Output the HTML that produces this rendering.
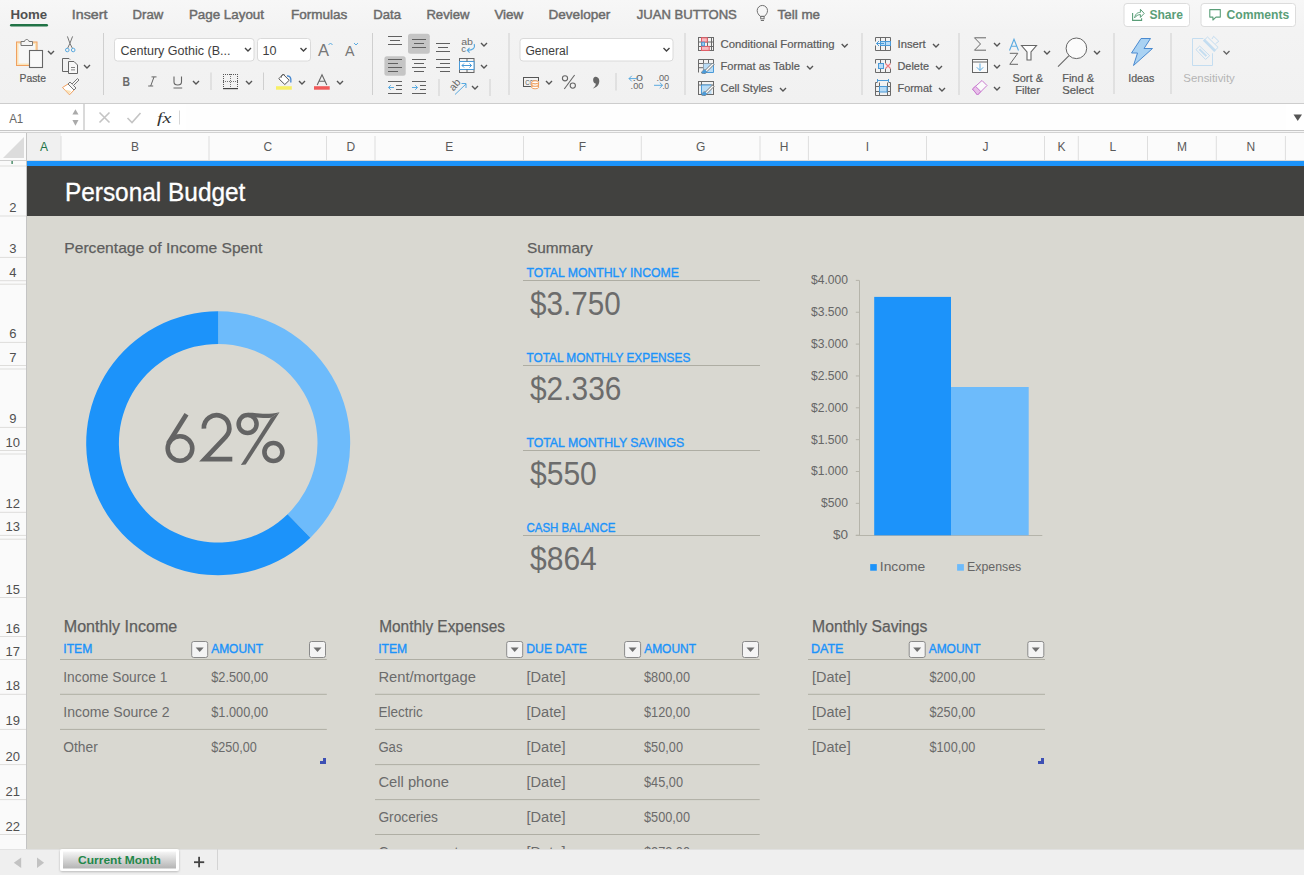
<!DOCTYPE html>
<html><head><meta charset="utf-8"><title>Personal Budget - Excel</title>
<style>
html,body{margin:0;padding:0;width:1304px;height:875px;overflow:hidden;background:#f1f1f1;font-family:"Liberation Sans",sans-serif;}
svg{display:block;position:absolute;left:0;top:0}
</style></head><body>
<svg width="1304" height="875" viewBox="0 0 1304 875">
<defs><filter id="sh" x="-10%" y="-20%" width="120%" height="150%"><feDropShadow dx="0" dy="0.8" stdDeviation="0.8" flood-color="#000" flood-opacity="0.25"/></filter></defs>
<linearGradient id="rib" x1="0" y1="0" x2="0" y2="1"><stop offset="0" stop-color="#f7f7f7"/><stop offset="0.3" stop-color="#f3f3f3"/><stop offset="1" stop-color="#f1f1f1"/></linearGradient>
<rect x="0" y="0" width="1304" height="103" fill="url(#rib)" />
<rect x="0" y="103" width="1304" height="1" fill="#cdcdcd" />
<rect x="0" y="104" width="1304" height="26" fill="#ffffff" />
<rect x="0" y="130" width="1304" height="1" fill="#c6c6c6" />
<rect x="0" y="131" width="1304" height="1" fill="#f6f6f6" />
<rect x="0" y="132" width="1304" height="1" fill="#d2d2d2" />
<rect x="0" y="133" width="1304" height="28" fill="#fbfbfb" />
<rect x="27" y="133" width="34" height="28" fill="#f0f0f0" />
<rect x="0" y="161" width="27" height="688.5" fill="#fafafa" />
<rect x="26" y="133" width="1" height="716" fill="#c4c4c4" />
<rect x="27" y="161" width="1277" height="688.5" fill="#d9d8d1" />
<rect x="27" y="161" width="1277" height="5" fill="#1c93fa" />
<rect x="27" y="166" width="1277" height="50" fill="#41413f" />
<rect x="0" y="849.5" width="1304" height="25.5" fill="#efefef" />
<rect x="0" y="849.3" width="1304" height="0.6" fill="#d8d8d8" />
<text x="10.4" y="19" font-size="13" fill="#505050" font-weight="bold" text-anchor="start" font-family="'Liberation Sans', sans-serif" textLength="36.8" lengthAdjust="spacingAndGlyphs" >Home</text>
<text x="71.8" y="19" font-size="13" fill="#6b6b6b" font-weight="normal" text-anchor="start" font-family="'Liberation Sans', sans-serif" textLength="35.6" lengthAdjust="spacingAndGlyphs" stroke="#6b6b6b" stroke-width="0.45">Insert</text>
<text x="132.6" y="19" font-size="13" fill="#6b6b6b" font-weight="normal" text-anchor="start" font-family="'Liberation Sans', sans-serif" textLength="30.7" lengthAdjust="spacingAndGlyphs" stroke="#6b6b6b" stroke-width="0.45">Draw</text>
<text x="188.9" y="19" font-size="13" fill="#6b6b6b" font-weight="normal" text-anchor="start" font-family="'Liberation Sans', sans-serif" textLength="75.1" lengthAdjust="spacingAndGlyphs" stroke="#6b6b6b" stroke-width="0.45">Page Layout</text>
<text x="290.9" y="19" font-size="13" fill="#6b6b6b" font-weight="normal" text-anchor="start" font-family="'Liberation Sans', sans-serif" textLength="56.4" lengthAdjust="spacingAndGlyphs" stroke="#6b6b6b" stroke-width="0.45">Formulas</text>
<text x="373.3" y="19" font-size="13" fill="#6b6b6b" font-weight="normal" text-anchor="start" font-family="'Liberation Sans', sans-serif" textLength="27.7" lengthAdjust="spacingAndGlyphs" stroke="#6b6b6b" stroke-width="0.45">Data</text>
<text x="426.4" y="19" font-size="13" fill="#6b6b6b" font-weight="normal" text-anchor="start" font-family="'Liberation Sans', sans-serif" textLength="43.0" lengthAdjust="spacingAndGlyphs" stroke="#6b6b6b" stroke-width="0.45">Review</text>
<text x="494.4" y="19" font-size="13" fill="#6b6b6b" font-weight="normal" text-anchor="start" font-family="'Liberation Sans', sans-serif" textLength="28.9" lengthAdjust="spacingAndGlyphs" stroke="#6b6b6b" stroke-width="0.45">View</text>
<text x="548.5" y="19" font-size="13" fill="#6b6b6b" font-weight="normal" text-anchor="start" font-family="'Liberation Sans', sans-serif" textLength="61.8" lengthAdjust="spacingAndGlyphs" stroke="#6b6b6b" stroke-width="0.45">Developer</text>
<text x="636.8" y="19" font-size="13" fill="#6b6b6b" font-weight="normal" text-anchor="start" font-family="'Liberation Sans', sans-serif" textLength="100.0" lengthAdjust="spacingAndGlyphs" stroke="#6b6b6b" stroke-width="0.45">JUAN BUTTONS</text>
<text x="777.6" y="19" font-size="13" fill="#6b6b6b" font-weight="normal" text-anchor="start" font-family="'Liberation Sans', sans-serif" textLength="42.4" lengthAdjust="spacingAndGlyphs" stroke="#6b6b6b" stroke-width="0.45">Tell me</text>
<rect x="10" y="24" width="38" height="2.6" fill="#217346" rx="1.3"/>
<path d="M760.2 16.3 C758.6 14.7 757.2 13 757.2 10.6 A5.15 5.15 0 0 1 767.5 10.6 C767.5 13 766.1 14.7 764.5 16.3 Z" stroke="#707070" fill="#f6f6f6" stroke-width="1" />
<rect x="760.7" y="16.5" width="3.4" height="2.3" fill="none" stroke="#707070" stroke-width="1"/>
<rect x="760.8" y="20" width="3.2" height="1" fill="#707070" />
<rect x="1124" y="3.5" width="65.5" height="23" fill="#ffffff" rx="3" stroke="#dcdcdc" stroke-width="1"/>
<rect x="1201" y="3.5" width="94.5" height="23" fill="#ffffff" rx="3" stroke="#dcdcdc" stroke-width="1"/>
<path d="M1132.6 13 V20.4 H1141.6 V18.3" stroke="#5a9e78" fill="none" stroke-width="1.1" />
<path d="M1134.6 17.8 C1135.5 13.6 1137.6 12.4 1140.4 12.4 V9.3 L1144.2 13.4 L1140.4 17.4 V14.6 C1138 14.6 1136.2 15.8 1134.6 17.8 Z" stroke="#5a9e78" fill="none" stroke-width="1" stroke-linejoin="round"/>
<text x="1149.4" y="19" font-size="13" fill="#5a9e78" font-weight="bold" text-anchor="start" font-family="'Liberation Sans', sans-serif" textLength="33.6" lengthAdjust="spacingAndGlyphs" >Share</text>
<path d="M1209.8 9.6 H1220.3 V17.1 H1216 L1212.9 20 V17.1 H1209.8 Z" stroke="#5a9e78" fill="none" stroke-width="1.1" stroke-linejoin="round"/>
<text x="1226.5" y="19" font-size="13" fill="#5a9e78" font-weight="bold" text-anchor="start" font-family="'Liberation Sans', sans-serif" textLength="62.8" lengthAdjust="spacingAndGlyphs" >Comments</text>
<rect x="16.5" y="42" width="20.5" height="23.5" fill="#fbe3b8" stroke="#f0a060" stroke-width="1"/>
<rect x="18.5" y="44" width="16.5" height="19.5" fill="#f7f7f7" />
<path d="M21 45.5 V41.5 H24.5 C25 38.8 28.5 38.8 29 41.5 H32.5 V45.5 Z" stroke="#777" fill="#f5f5f5" stroke-width="1" />
<rect x="29.5" y="50.5" width="13" height="17" fill="#f9f9f9" stroke="#666" stroke-width="1.1"/>
<path d="M48 51 L51 54 L54 51" stroke="#555" fill="none" stroke-width="1.4" />
<text x="19.5" y="81.9" font-size="11" fill="#5a5a5a" font-weight="normal" text-anchor="start" font-family="'Liberation Sans', sans-serif" textLength="26.5" lengthAdjust="spacingAndGlyphs" stroke="#5a5a5a" stroke-width="0.2">Paste</text>
<path d="M67.4 36.4 L70 43.6 L72.4 48.3 M72.6 36.4 L69.8 43.6 L67.6 48.3" stroke="#777" fill="none" stroke-width="1" />
<circle cx="67.3" cy="50" r="1.8" fill="none" stroke="#5aaae0" stroke-width="1"/>
<circle cx="73.2" cy="50" r="1.8" fill="none" stroke="#5aaae0" stroke-width="1"/>
<path d="M62.5 58.5 H69 L70 59.5 M62.5 58.5 V71.5 H68" stroke="#666" fill="none" stroke-width="1" />
<path d="M68.5 61.5 H74 L77.5 65 V73.5 H68.5 Z" stroke="#666" fill="#f7f7f7" stroke-width="1" />
<rect x="71" y="67" width="4" height="0.8" fill="#666" />
<rect x="71" y="69.5" width="4" height="0.8" fill="#666" />
<path d="M84 65 L87 68 L90 65" stroke="#555" fill="none" stroke-width="1.4" />
<path d="M62.5 87.5 L68 84 L74 90 L69.5 94.8 Z" stroke="#f0a060" fill="#fff" stroke-width="1" />
<path d="M64.5 89.5 L71 91 L69.5 94 Z" stroke="none" fill="#fbe3b8" stroke-width="1" />
<path d="M68 84 L70 82 L76 88 L74 90 Z" stroke="#777" fill="#f5f5f5" stroke-width="1" />
<path d="M72 84 L77.5 78.5 L79 80 L73.5 85.5" stroke="#777" fill="#f5f5f5" stroke-width="1" />
<rect x="103" y="33" width="1" height="62" fill="#cfcfcf" />
<rect x="114.5" y="38.5" width="139.5" height="22.5" fill="#ffffff" rx="3" stroke="#dadada" stroke-width="1"/>
<text x="120.5" y="55" font-size="12" fill="#3e3e3e" font-weight="normal" text-anchor="start" font-family="'Liberation Sans', sans-serif" textLength="110" lengthAdjust="spacingAndGlyphs" >Century Gothic (B...</text>
<path d="M245 48 L248 51 L251 48" stroke="#444" fill="none" stroke-width="1.4" />
<rect x="257.5" y="38.5" width="53" height="22.5" fill="#ffffff" rx="3" stroke="#dadada" stroke-width="1"/>
<text x="262.5" y="55" font-size="12" fill="#3e3e3e" font-weight="normal" text-anchor="start" font-family="'Liberation Sans', sans-serif" textLength="14" lengthAdjust="spacingAndGlyphs" >10</text>
<path d="M300.5 48 L303.5 51 L306.5 48" stroke="#444" fill="none" stroke-width="1.4" />
<text x="318" y="56" font-size="17" fill="#777" font-weight="normal" text-anchor="start" font-family="'Liberation Sans', sans-serif" textLength="11" lengthAdjust="spacingAndGlyphs" >A</text>
<path d="M328.5 45 L330.5 43 L332.5 45" stroke="#5aaae0" fill="none" stroke-width="1" />
<text x="345" y="56" font-size="14" fill="#777" font-weight="normal" text-anchor="start" font-family="'Liberation Sans', sans-serif" textLength="9.5" lengthAdjust="spacingAndGlyphs" >A</text>
<path d="M354 43 L356 45 L358 43" stroke="#5aaae0" fill="none" stroke-width="1" />
<text x="122.6" y="86.2" font-size="13" fill="#6a6a6a" font-weight="bold" text-anchor="start" font-family="'Liberation Sans', sans-serif" textLength="7.5" lengthAdjust="spacingAndGlyphs" >B</text>
<path d="M151.5 76.9 H156.5 M148.2 86 H153.2 M154 76.9 L150.7 86" stroke="#666" fill="none" stroke-width="1" />
<path d="M174 76.5 V82 C174 86 181.5 86 181.5 82 V76.5" stroke="#666" fill="none" stroke-width="1.1" />
<rect x="173.5" y="87.5" width="8.7" height="1" fill="#666" />
<path d="M193 81 L196 84 L199 81" stroke="#555" fill="none" stroke-width="1.4" />
<rect x="210.5" y="72.5" width="1" height="17.5" fill="#cfcfcf" />
<rect x="223" y="74" width="1" height="1" fill="#555" />
<rect x="223" y="74" width="1" height="1" fill="#555" />
<rect x="237" y="74" width="1" height="1" fill="#555" />
<rect x="230" y="74" width="1" height="1" fill="#777" />
<rect x="223" y="81" width="1" height="1" fill="#777" />
<rect x="225" y="74" width="1" height="1" fill="#555" />
<rect x="223" y="76" width="1" height="1" fill="#555" />
<rect x="237" y="76" width="1" height="1" fill="#555" />
<rect x="230" y="76" width="1" height="1" fill="#777" />
<rect x="225" y="81" width="1" height="1" fill="#777" />
<rect x="227" y="74" width="1" height="1" fill="#555" />
<rect x="223" y="78" width="1" height="1" fill="#555" />
<rect x="237" y="78" width="1" height="1" fill="#555" />
<rect x="230" y="78" width="1" height="1" fill="#777" />
<rect x="227" y="81" width="1" height="1" fill="#777" />
<rect x="229" y="74" width="1" height="1" fill="#555" />
<rect x="223" y="80" width="1" height="1" fill="#555" />
<rect x="237" y="80" width="1" height="1" fill="#555" />
<rect x="230" y="80" width="1" height="1" fill="#777" />
<rect x="229" y="81" width="1" height="1" fill="#777" />
<rect x="231" y="74" width="1" height="1" fill="#555" />
<rect x="223" y="82" width="1" height="1" fill="#555" />
<rect x="237" y="82" width="1" height="1" fill="#555" />
<rect x="230" y="82" width="1" height="1" fill="#777" />
<rect x="231" y="81" width="1" height="1" fill="#777" />
<rect x="233" y="74" width="1" height="1" fill="#555" />
<rect x="223" y="84" width="1" height="1" fill="#555" />
<rect x="237" y="84" width="1" height="1" fill="#555" />
<rect x="230" y="84" width="1" height="1" fill="#777" />
<rect x="233" y="81" width="1" height="1" fill="#777" />
<rect x="235" y="74" width="1" height="1" fill="#555" />
<rect x="223" y="86" width="1" height="1" fill="#555" />
<rect x="237" y="86" width="1" height="1" fill="#555" />
<rect x="230" y="86" width="1" height="1" fill="#777" />
<rect x="235" y="81" width="1" height="1" fill="#777" />
<rect x="237" y="74" width="1" height="1" fill="#555" />
<rect x="223" y="88" width="1" height="1" fill="#555" />
<rect x="237" y="88" width="1" height="1" fill="#555" />
<rect x="230" y="88" width="1" height="1" fill="#777" />
<rect x="237" y="81" width="1" height="1" fill="#777" />
<rect x="223" y="88" width="15" height="1.2" fill="#444" />
<path d="M246 81 L249 84 L252 81" stroke="#555" fill="none" stroke-width="1.4" />
<rect x="263" y="72.5" width="1" height="17.5" fill="#cfcfcf" />
<path d="M278.8 80.2 L283.2 75.8 L289.2 81.8 L284.8 86 Z" stroke="#555" fill="#fff" stroke-width="1" transform="translate(0,-1.5)"/>
<path d="M281.5 77.5 C281 74.5 283.5 73.8 285 75.5" stroke="#555" fill="none" stroke-width="1" />
<path d="M287 76 C290 75.5 291.5 78 290.8 82.5" stroke="#4a8ad0" fill="none" stroke-width="1.4" />
<rect x="276" y="86.2" width="15.8" height="3.5" fill="#f7ef66" />
<path d="M299 81 L302 84 L305 81" stroke="#555" fill="none" stroke-width="1.4" />
<path d="M317.2 85 L322 74.7 L326.8 85 M318.9 81.3 H325.1" stroke="#666" fill="none" stroke-width="1.1" />
<rect x="314" y="86.2" width="15.7" height="3.5" fill="#f05a5a" />
<path d="M337 81 L340 84 L343 81" stroke="#555" fill="none" stroke-width="1.4" />
<rect x="372" y="33" width="1" height="62" fill="#cfcfcf" />
<rect x="408" y="33.8" width="21.8" height="20" fill="#c5c5c5" rx="2.5"/>
<rect x="384.4" y="56.2" width="21.3" height="19.5" fill="#c5c5c5" rx="2.5"/>
<rect x="388" y="36" width="14" height="1" fill="#606060" />
<rect x="390" y="40" width="10" height="1" fill="#606060" />
<rect x="388" y="44" width="14" height="1" fill="#606060" />
<rect x="412" y="39" width="14" height="1" fill="#606060" />
<rect x="414" y="43" width="10" height="1" fill="#606060" />
<rect x="412" y="47" width="14" height="1" fill="#606060" />
<rect x="436" y="43" width="14" height="1" fill="#606060" />
<rect x="438" y="47" width="10" height="1" fill="#606060" />
<rect x="436" y="51" width="14" height="1" fill="#606060" />
<text x="461.2" y="44.8" font-size="9.5" fill="#6a6a6a" font-weight="normal" text-anchor="start" font-family="'Liberation Sans', sans-serif" textLength="11.8" lengthAdjust="spacingAndGlyphs" >ab</text>
<text x="461.2" y="52.3" font-size="9.5" fill="#6a6a6a" font-weight="normal" text-anchor="start" font-family="'Liberation Sans', sans-serif" >c</text>
<path d="M474.2 44 C475.5 48.5 472.5 50.2 467.5 50.2 M469.6 47.8 L467.3 50.2 L469.6 52.6" stroke="#5aaae0" fill="none" stroke-width="1.1" />
<path d="M481 43 L484 46 L487 43" stroke="#555" fill="none" stroke-width="1.4" />
<rect x="388" y="59" width="14" height="1" fill="#606060" />
<rect x="412.0" y="59" width="14" height="1" fill="#606060" />
<rect x="436" y="59" width="14" height="1" fill="#606060" />
<rect x="388" y="63" width="10" height="1" fill="#606060" />
<rect x="414.0" y="63" width="10" height="1" fill="#606060" />
<rect x="440" y="63" width="10" height="1" fill="#606060" />
<rect x="388" y="67" width="14" height="1" fill="#606060" />
<rect x="412.0" y="67" width="14" height="1" fill="#606060" />
<rect x="436" y="67" width="14" height="1" fill="#606060" />
<rect x="388" y="71" width="10" height="1" fill="#606060" />
<rect x="414.0" y="71" width="10" height="1" fill="#606060" />
<rect x="440" y="71" width="10" height="1" fill="#606060" />
<rect x="459.5" y="58.5" width="14.5" height="14" fill="none" stroke="#666" stroke-width="1"/>
<rect x="459.5" y="61.5" width="14.5" height="8" fill="#ffffff" stroke="#4a9ad8" stroke-width="1"/>
<rect x="466.5" y="58.5" width="1" height="3" fill="#666" />
<rect x="466.5" y="69.5" width="1" height="3" fill="#666" />
<path d="M462 65.5 H471.5 M464 63.5 L462 65.5 L464 67.5 M469.5 63.5 L471.5 65.5 L469.5 67.5" stroke="#4a9ad8" fill="none" stroke-width="1" />
<path d="M481 65 L484 68 L487 65" stroke="#555" fill="none" stroke-width="1.4" />
<rect x="388" y="81" width="14" height="1" fill="#606060" />
<rect x="396" y="85" width="6" height="1" fill="#606060" />
<rect x="396" y="89" width="6" height="1" fill="#606060" />
<rect x="388" y="93" width="14" height="1" fill="#606060" />
<rect x="412" y="81" width="14" height="1" fill="#606060" />
<rect x="420" y="85" width="6" height="1" fill="#606060" />
<rect x="420" y="89" width="6" height="1" fill="#606060" />
<rect x="412" y="93" width="14" height="1" fill="#606060" />
<path d="M394 87.5 H388.5 M390.8 85.2 L388.5 87.5 L390.8 89.8" stroke="#5aaae0" fill="none" stroke-width="1" />
<path d="M412 87.5 H417.5 M415.2 85.2 L417.5 87.5 L415.2 89.8" stroke="#5aaae0" fill="none" stroke-width="1" />
<rect x="438.5" y="79" width="1" height="17" fill="#cfcfcf" />
<text x="0" y="0" font-size="10.5" fill="#6a6a6a" font-weight="normal" text-anchor="start" font-family="'Liberation Sans', sans-serif" transform="translate(453.4,91.4) rotate(-48)">ab</text>
<path d="M455 94.5 L466 84 M461.5 83.5 H466 V88" stroke="#5aaae0" fill="none" stroke-width="1" />
<path d="M472 86 L475 89 L478 86" stroke="#555" fill="none" stroke-width="1.4" />
<rect x="489.5" y="79" width="1" height="17" fill="#cfcfcf" />
<rect x="508.5" y="33" width="1" height="62" fill="#cfcfcf" />
<rect x="520" y="38.5" width="153" height="22.5" fill="#ffffff" rx="3" stroke="#dadada" stroke-width="1"/>
<text x="525.4" y="55" font-size="12" fill="#3e3e3e" font-weight="normal" text-anchor="start" font-family="'Liberation Sans', sans-serif" textLength="43" lengthAdjust="spacingAndGlyphs" >General</text>
<path d="M663.5 48 L666.5 51 L669.5 48" stroke="#444" fill="none" stroke-width="1.4" />
<rect x="523.5" y="77.5" width="15" height="9" fill="none" stroke="#555" stroke-width="1"/>
<text x="525.3" y="84.6" font-size="6.8" fill="#555" font-weight="normal" text-anchor="start" font-family="'Liberation Sans', sans-serif" textLength="11" lengthAdjust="spacingAndGlyphs" >C02</text>
<rect x="530.8" y="81.3" width="8.6" height="9" fill="#f1f1f1" />
<ellipse cx="535.1" cy="87.3" rx="3.4" ry="1.5" fill="#fff" stroke="#f0a060" stroke-width="1"/>
<ellipse cx="535.1" cy="84.8" rx="3.4" ry="1.5" fill="#fff" stroke="#f0a060" stroke-width="1"/>
<ellipse cx="535.1" cy="82.3" rx="3.4" ry="1.5" fill="#fff" stroke="#f0a060" stroke-width="1"/>
<path d="M531.7 82.3 V87.3 M538.5 82.3 V87.3" stroke="#f0a060" fill="none" stroke-width="1" />
<ellipse cx="535.1" cy="82.3" rx="3.4" ry="1.5" fill="#fff" stroke="#f0a060" stroke-width="1"/>
<path d="M546 81 L549 84 L552 81" stroke="#555" fill="none" stroke-width="1.4" />
<circle cx="565" cy="78.3" r="2.6" fill="none" stroke="#666" stroke-width="1.1"/>
<circle cx="572.8" cy="85.6" r="2.6" fill="none" stroke="#666" stroke-width="1.1"/>
<path d="M564.3 89 L574.6 75" stroke="#666" fill="none" stroke-width="1.1" />
<path d="M595.2 76.8 C599.5 76.5 600.5 82 598 85.3 C596.6 87 594.8 88 592.8 88.6 C594.8 86.8 596 85.2 595.7 83.6 C592.6 83.4 592.2 77.2 595.2 76.8Z" stroke="none" fill="#666" stroke-width="1" />
<rect x="615.5" y="73" width="1" height="17.5" fill="#cfcfcf" />
<text x="632.5" y="80.6" font-size="8.8" fill="#666" font-weight="normal" text-anchor="start" font-family="'Liberation Sans', sans-serif" textLength="10.5" lengthAdjust="spacingAndGlyphs" >.0</text>
<text x="630.6" y="89.2" font-size="8.8" fill="#666" font-weight="normal" text-anchor="start" font-family="'Liberation Sans', sans-serif" textLength="12.8" lengthAdjust="spacingAndGlyphs" >.00</text>
<path d="M637 78.6 H629 M631.8 75.8 L629 78.6 L631.8 81.4" stroke="#5aaae0" fill="none" stroke-width="1" />
<text x="656.4" y="80.6" font-size="8.8" fill="#666" font-weight="normal" text-anchor="start" font-family="'Liberation Sans', sans-serif" textLength="12.8" lengthAdjust="spacingAndGlyphs" >.00</text>
<text x="662.4" y="89.2" font-size="8.8" fill="#666" font-weight="normal" text-anchor="start" font-family="'Liberation Sans', sans-serif" textLength="6.7" lengthAdjust="spacingAndGlyphs" >.0</text>
<path d="M654 85.3 H662.5 M659.7 82.5 L662.5 85.3 L659.7 88.1" stroke="#5aaae0" fill="none" stroke-width="1" />
<rect x="684.5" y="33" width="1" height="62" fill="#cfcfcf" />
<rect x="698.5" y="37.5" width="15" height="13" fill="none" stroke="#6a6a6a" stroke-width="1"/>
<rect x="701" y="37.5" width="1" height="13" fill="#6a6a6a" />
<rect x="711" y="37.5" width="1" height="13" fill="#6a6a6a" />
<rect x="707" y="37.5" width="1" height="13" fill="#6a6a6a" />
<rect x="698.5" y="41.5" width="15" height="1" fill="#6a6a6a" />
<rect x="698.5" y="46" width="15" height="1" fill="#6a6a6a" />
<rect x="701.5" y="37.8" width="5.8" height="4.2" fill="#f7b9bf" stroke="#e85a64" stroke-width="1"/>
<rect x="701.5" y="46.4" width="7.7" height="4" fill="#f7b9bf" stroke="#e85a64" stroke-width="1"/>
<rect x="701.8" y="42.2" width="2.6" height="3.6" fill="#a9d2f3" stroke="#4a9ad8" stroke-width="1"/>
<text x="720.5" y="48.1" font-size="11" fill="#5a5a5a" font-weight="normal" text-anchor="start" font-family="'Liberation Sans', sans-serif" textLength="114" lengthAdjust="spacingAndGlyphs" stroke="#5a5a5a" stroke-width="0.2">Conditional Formatting</text>
<path d="M841.7 44 L844.7 47 L847.7 44" stroke="#555" fill="none" stroke-width="1.4" />
<path d="M698.5 72.5 V59.5 H713.5 V63.5" stroke="#6a6a6a" fill="none" stroke-width="1" />
<rect x="698.5" y="63" width="15" height="1" fill="#6a6a6a" />
<rect x="698.5" y="67.2" width="5" height="1" fill="#6a6a6a" />
<rect x="703" y="59.5" width="1" height="13" fill="#6a6a6a" />
<rect x="708" y="59.5" width="1" height="4" fill="#6a6a6a" />
<rect x="703.5" y="63.5" width="10" height="9" fill="#b9dcf6" />
<path d="M713.5 63.5 V72.5 H703.5" stroke="#4a9ad8" fill="none" stroke-width="1" />
<path d="M701.5 73 C702.5 70.5 703.5 69.5 705.5 70 L712.5 63 L714 64.5 L707 71.5 C706.5 73.5 704 74 701.5 73Z" stroke="#6a6a6a" fill="#fff" stroke-width="0.9" />
<path d="M701.5 73 C702.5 70.5 703.5 69.5 705.5 70 L707 71.5 C706.5 73.5 704 74 701.5 73Z" stroke="none" fill="#4a9ad8" stroke-width="1" />
<text x="720.5" y="70.3" font-size="11" fill="#5a5a5a" font-weight="normal" text-anchor="start" font-family="'Liberation Sans', sans-serif" textLength="79.3" lengthAdjust="spacingAndGlyphs" stroke="#5a5a5a" stroke-width="0.2">Format as Table</text>
<path d="M807 66 L810 69 L813 66" stroke="#555" fill="none" stroke-width="1.4" />
<rect x="698.5" y="81.5" width="15" height="13" fill="none" stroke="#6a6a6a" stroke-width="1"/>
<rect x="701" y="81.5" width="1" height="13" fill="#6a6a6a" />
<rect x="698.5" y="84.5" width="15" height="1" fill="#6a6a6a" />
<rect x="701.5" y="85" width="10" height="9" fill="#b9dcf6" />
<path d="M701.5 94 V85 H711.5" stroke="#4a9ad8" fill="none" stroke-width="1" />
<path d="M701.5 95 C702.5 92.5 703.5 91.5 705.5 92 L712.5 85 L714 86.5 L707 93.5 C706.5 95.5 704 96 701.5 95Z" stroke="#6a6a6a" fill="#fff" stroke-width="0.9" />
<path d="M701.5 95 C702.5 92.5 703.5 91.5 705.5 92 L707 93.5 C706.5 95.5 704 96 701.5 95Z" stroke="none" fill="#4a9ad8" stroke-width="1" />
<text x="720.5" y="92.1" font-size="11" fill="#5a5a5a" font-weight="normal" text-anchor="start" font-family="'Liberation Sans', sans-serif" textLength="52" lengthAdjust="spacingAndGlyphs" stroke="#5a5a5a" stroke-width="0.2">Cell Styles</text>
<path d="M780 88 L783 91 L786 88" stroke="#555" fill="none" stroke-width="1.4" />
<rect x="861.5" y="33" width="1" height="62" fill="#cfcfcf" />
<path d="M875.5 41.5 V37.5 H890.5 V41.5 M875.5 45.5 V50.5 H890.5 V45.5" stroke="#6a6a6a" fill="none" stroke-width="1" />
<rect x="880" y="37.5" width="1" height="4" fill="#6a6a6a" />
<rect x="885" y="37.5" width="1" height="4" fill="#6a6a6a" />
<rect x="880" y="45.5" width="1" height="5" fill="#6a6a6a" />
<rect x="885" y="45.5" width="1" height="5" fill="#6a6a6a" />
<rect x="880.5" y="41.5" width="10" height="4" fill="#b9dcf6" stroke="#4a9ad8" stroke-width="1"/>
<rect x="885" y="41.5" width="1" height="4" fill="#4a9ad8" />
<path d="M884 43.5 H876.5 M879 41 L876.5 43.5 L879 46" stroke="#4a9ad8" fill="none" stroke-width="1" />
<text x="897.5" y="48.1" font-size="11" fill="#5a5a5a" font-weight="normal" text-anchor="start" font-family="'Liberation Sans', sans-serif" textLength="28.2" lengthAdjust="spacingAndGlyphs" stroke="#5a5a5a" stroke-width="0.2">Insert</text>
<path d="M933 44 L936 47 L939 44" stroke="#555" fill="none" stroke-width="1.4" />
<path d="M875.5 63.5 V59.5 H890.5 V63.5 M875.5 68.5 V72.5 H890.5 V68.5" stroke="#6a6a6a" fill="none" stroke-width="1" />
<rect x="880" y="59.5" width="1" height="4" fill="#6a6a6a" />
<rect x="885" y="59.5" width="1" height="4" fill="#6a6a6a" />
<rect x="880" y="68.5" width="1" height="4" fill="#6a6a6a" />
<rect x="885" y="68.5" width="1" height="4" fill="#6a6a6a" />
<rect x="878.5" y="63.5" width="5" height="5" fill="#b9dcf6" stroke="#4a9ad8" stroke-width="1"/>
<path d="M885.5 63.5 L890.5 68.5 M890.5 63.5 L885.5 68.5" stroke="#ef7a80" fill="none" stroke-width="1.1" />
<text x="897.5" y="70.3" font-size="11" fill="#5a5a5a" font-weight="normal" text-anchor="start" font-family="'Liberation Sans', sans-serif" textLength="31.5" lengthAdjust="spacingAndGlyphs" stroke="#5a5a5a" stroke-width="0.2">Delete</text>
<path d="M936 66 L939 69 L942 66" stroke="#555" fill="none" stroke-width="1.4" />
<path d="M875.5 86 V82.5 H877.5 M888.5 82.5 H890.5 V86" stroke="#6a6a6a" fill="none" stroke-width="1" />
<rect x="875.5" y="82.5" width="15" height="13" fill="none" stroke="#6a6a6a" stroke-width="0"/>
<path d="M875.5 86 V95.5 H890.5 V86" stroke="#6a6a6a" fill="none" stroke-width="1" />
<rect x="879" y="82.5" width="1" height="13" fill="#6a6a6a" />
<rect x="887" y="82.5" width="1" height="13" fill="#6a6a6a" />
<rect x="875.5" y="86" width="15" height="1" fill="#6a6a6a" />
<rect x="875.5" y="91" width="15" height="1" fill="#6a6a6a" />
<rect x="879.5" y="86.5" width="7.5" height="5.5" fill="#b9dcf6" stroke="#4a9ad8" stroke-width="1"/>
<path d="M877.5 80.5 H888.5 M877.5 79 V82 M888.5 79 V82" stroke="#4a9ad8" fill="none" stroke-width="1" />
<text x="897.5" y="92.1" font-size="11" fill="#5a5a5a" font-weight="normal" text-anchor="start" font-family="'Liberation Sans', sans-serif" textLength="34.5" lengthAdjust="spacingAndGlyphs" stroke="#5a5a5a" stroke-width="0.2">Format</text>
<path d="M939 88 L942 91 L945 88" stroke="#555" fill="none" stroke-width="1.4" />
<rect x="958.5" y="33" width="1" height="62" fill="#cfcfcf" />
<path d="M986 37.8 H974.5 L980.5 44 L974.5 50.2 H986" stroke="#666" fill="none" stroke-width="1" />
<path d="M994 43 L997 46 L1000 43" stroke="#555" fill="none" stroke-width="1.4" />
<rect x="972.5" y="59.5" width="15" height="13" fill="#fafafa" stroke="#666" stroke-width="1"/>
<rect x="972.5" y="61.5" width="15" height="1" fill="#666" />
<path d="M980 63.5 V70.5 M976.8 67.3 L980 70.5 L983.2 67.3" stroke="#5aaae0" fill="none" stroke-width="1" />
<path d="M994 65 L997 68 L1000 65" stroke="#555" fill="none" stroke-width="1.4" />
<path d="M972.5 89 L982 80.5 L987 85.5 L977.5 95 Z" stroke="#c97ad0" fill="#fafafa" stroke-width="1" />
<path d="M972.5 89 L975.5 86.3 L980.8 91.5 L977.5 95 Z" stroke="#c97ad0" fill="#e7bfe9" stroke-width="1" />
<path d="M994 87 L997 90 L1000 87" stroke="#555" fill="none" stroke-width="1.4" />
<path d="M1009.5 50.5 L1014 39.2 L1018.5 50.5 M1011.2 46.3 H1016.8" stroke="#5aaae0" fill="none" stroke-width="1.1" />
<path d="M1009.8 53.3 H1017.8 L1009.8 64.3 H1018" stroke="#666" fill="none" stroke-width="1" />
<path d="M1021.5 45.5 H1036.5 L1031 52 V60 H1027 V52 Z" stroke="#666" fill="#fff" stroke-width="1.1" />
<path d="M1044 51 L1047 54 L1050 51" stroke="#555" fill="none" stroke-width="1.4" />
<text x="1012.4" y="82" font-size="11" fill="#5a5a5a" font-weight="normal" text-anchor="start" font-family="'Liberation Sans', sans-serif" textLength="30.6" lengthAdjust="spacingAndGlyphs" stroke="#5a5a5a" stroke-width="0.2">Sort &amp;</text>
<text x="1015.3" y="93.6" font-size="11" fill="#5a5a5a" font-weight="normal" text-anchor="start" font-family="'Liberation Sans', sans-serif" textLength="24.7" lengthAdjust="spacingAndGlyphs" stroke="#5a5a5a" stroke-width="0.2">Filter</text>
<circle cx="1076.4" cy="48.3" r="10.3" fill="#fbfbfb" stroke="#666" stroke-width="1"/>
<path d="M1069 55.7 L1058 66.6" stroke="#666" fill="none" stroke-width="1.1" />
<path d="M1094 51 L1097 54 L1100 51" stroke="#555" fill="none" stroke-width="1.4" />
<text x="1062.2" y="82" font-size="11" fill="#5a5a5a" font-weight="normal" text-anchor="start" font-family="'Liberation Sans', sans-serif" textLength="31.8" lengthAdjust="spacingAndGlyphs" stroke="#5a5a5a" stroke-width="0.2">Find &amp;</text>
<text x="1062.2" y="93.7" font-size="11" fill="#5a5a5a" font-weight="normal" text-anchor="start" font-family="'Liberation Sans', sans-serif" textLength="31.4" lengthAdjust="spacingAndGlyphs" stroke="#5a5a5a" stroke-width="0.2">Select</text>
<rect x="1113.5" y="33" width="1" height="61" fill="#cfcfcf" />
<path d="M1141 38.5 H1150.5 L1144 48.5 H1152.5 L1133.5 65.5 L1137.5 53 H1131.5 Z" stroke="#4a8ad0" fill="#a9d2f3" stroke-width="1" stroke-linejoin="round"/>
<text x="1128.2" y="82" font-size="11" fill="#5a5a5a" font-weight="normal" text-anchor="start" font-family="'Liberation Sans', sans-serif" textLength="26.1" lengthAdjust="spacingAndGlyphs" stroke="#5a5a5a" stroke-width="0.2">Ideas</text>
<rect x="1170.5" y="33" width="1" height="61" fill="#cfcfcf" />
<path d="M1203.4 38.5 H1192.5 V65.5 H1212.5 V53.3" stroke="#c4ddf0" fill="none" stroke-width="1" />
<path d="M1196 49.6 L1199.7 46.1 L1209.7 55.7 L1205.5 59.4 Z" stroke="#c4ddf0" fill="#f4f4f4" stroke-width="1" />
<path d="M1199 49.8 L1200 48.8 L1206.8 55.4 L1205.8 56.4 Z" stroke="#c4ddf0" fill="#c4ddf0" stroke-width="0.8" />
<path d="M1203.8 40.7 L1207.5 37 L1218.1 47.4 L1214.2 51.1 Z" stroke="#c4ddf0" fill="#f4f4f4" stroke-width="1" />
<path d="M1203.8 40.7 L1204.8 39.7 L1215.2 50.1 L1214.2 51.1 Z" stroke="#c4ddf0" fill="#c4ddf0" stroke-width="1.2" />
<path d="M1212 39 L1213.6 36.3 L1218.8 41.3 L1215.5 43.7" stroke="#c4ddf0" fill="#f4f4f4" stroke-width="1" />
<path d="M1223.5 51 L1226.5 54 L1229.5 51" stroke="#666" fill="none" stroke-width="1.4" />
<text x="1183.3" y="82" font-size="11" fill="#b5b5b5" font-weight="normal" text-anchor="start" font-family="'Liberation Sans', sans-serif" textLength="51.5" lengthAdjust="spacingAndGlyphs" >Sensitivity</text>
<text x="9.2" y="123" font-size="12" fill="#666" font-weight="normal" text-anchor="start" font-family="'Liberation Sans', sans-serif" textLength="14.1" lengthAdjust="spacingAndGlyphs" >A1</text>
<path d="M72.4 114.6 L75.45 109.2 L78.5 114.6 Z" stroke="none" fill="#aaa" stroke-width="1" />
<path d="M72.4 120 L75.45 125.8 L78.5 120 Z" stroke="none" fill="#aaa" stroke-width="1" />
<rect x="83" y="104" width="2" height="26" fill="#dadada" />
<path d="M99.5 112.5 L109.5 122.5 M109.5 112.5 L99.5 122.5" stroke="#c4c4c4" fill="none" stroke-width="1.6" />
<path d="M127.5 118 L132 122.5 L140.5 113" stroke="#c4c4c4" fill="none" stroke-width="1.6" />
<text x="157" y="122.5" font-size="15" fill="#333" font-weight="normal" text-anchor="start" font-family="'Liberation Serif', serif" textLength="14.5" lengthAdjust="spacingAndGlyphs" font-style="italic">fx</text>
<rect x="179" y="110.5" width="1" height="14" fill="#d6d6d6" />
<rect x="186" y="104" width="1100" height="26" fill="#fefefe" />
<path d="M1293.5 114.5 H1302 L1297.75 121 Z" stroke="none" fill="#555" stroke-width="1" />
<text x="44.0" y="150.5" font-size="12" fill="#217346" font-weight="normal" text-anchor="middle" font-family="'Liberation Sans', sans-serif" >A</text>
<rect x="60.5" y="136" width="1" height="25" fill="#dedede" />
<text x="135.0" y="150.5" font-size="12" fill="#5a5a5a" font-weight="normal" text-anchor="middle" font-family="'Liberation Sans', sans-serif" >B</text>
<rect x="208.5" y="136" width="1" height="25" fill="#dedede" />
<text x="267.75" y="150.5" font-size="12" fill="#5a5a5a" font-weight="normal" text-anchor="middle" font-family="'Liberation Sans', sans-serif" >C</text>
<rect x="326.0" y="136" width="1" height="25" fill="#dedede" />
<text x="350.75" y="150.5" font-size="12" fill="#5a5a5a" font-weight="normal" text-anchor="middle" font-family="'Liberation Sans', sans-serif" >D</text>
<rect x="374.5" y="136" width="1" height="25" fill="#dedede" />
<text x="449.25" y="150.5" font-size="12" fill="#5a5a5a" font-weight="normal" text-anchor="middle" font-family="'Liberation Sans', sans-serif" >E</text>
<rect x="523.0" y="136" width="1" height="25" fill="#dedede" />
<text x="582.4" y="150.5" font-size="12" fill="#5a5a5a" font-weight="normal" text-anchor="middle" font-family="'Liberation Sans', sans-serif" >F</text>
<rect x="640.8" y="136" width="1" height="25" fill="#dedede" />
<text x="700.65" y="150.5" font-size="12" fill="#5a5a5a" font-weight="normal" text-anchor="middle" font-family="'Liberation Sans', sans-serif" >G</text>
<rect x="759.5" y="136" width="1" height="25" fill="#dedede" />
<text x="784.2" y="150.5" font-size="12" fill="#5a5a5a" font-weight="normal" text-anchor="middle" font-family="'Liberation Sans', sans-serif" >H</text>
<rect x="807.9" y="136" width="1" height="25" fill="#dedede" />
<text x="867.45" y="150.5" font-size="12" fill="#5a5a5a" font-weight="normal" text-anchor="middle" font-family="'Liberation Sans', sans-serif" >I</text>
<rect x="926.0" y="136" width="1" height="25" fill="#dedede" />
<text x="985.5" y="150.5" font-size="12" fill="#5a5a5a" font-weight="normal" text-anchor="middle" font-family="'Liberation Sans', sans-serif" >J</text>
<rect x="1044.0" y="136" width="1" height="25" fill="#dedede" />
<text x="1061.4" y="150.5" font-size="12" fill="#5a5a5a" font-weight="normal" text-anchor="middle" font-family="'Liberation Sans', sans-serif" >K</text>
<rect x="1077.8" y="136" width="1" height="25" fill="#dedede" />
<text x="1112.9" y="150.5" font-size="12" fill="#5a5a5a" font-weight="normal" text-anchor="middle" font-family="'Liberation Sans', sans-serif" >L</text>
<rect x="1147.0" y="136" width="1" height="25" fill="#dedede" />
<text x="1181.9" y="150.5" font-size="12" fill="#5a5a5a" font-weight="normal" text-anchor="middle" font-family="'Liberation Sans', sans-serif" >M</text>
<rect x="1215.8" y="136" width="1" height="25" fill="#dedede" />
<text x="1250.85" y="150.5" font-size="12" fill="#5a5a5a" font-weight="normal" text-anchor="middle" font-family="'Liberation Sans', sans-serif" >N</text>
<rect x="1284.9" y="136" width="1" height="25" fill="#dedede" />
<rect x="27" y="160" width="1277" height="1" fill="#d8d8d8" />
<rect x="0" y="160" width="26" height="1" fill="#cfcfcf" />
<path d="M3 158 L24 137 V158 Z" stroke="none" fill="#dcdcdc" stroke-width="1" />
<rect x="0" y="165.5" width="26" height="1" fill="#dedddb" />
<rect x="0" y="215.5" width="26" height="1" fill="#dedddb" />
<text x="12.8" y="212" font-size="13" fill="#505050" font-weight="normal" text-anchor="middle" font-family="'Liberation Sans', sans-serif" >2</text>
<rect x="0" y="256.9" width="26" height="1" fill="#dedddb" />
<text x="12.8" y="253.39999999999998" font-size="13" fill="#505050" font-weight="normal" text-anchor="middle" font-family="'Liberation Sans', sans-serif" >3</text>
<rect x="0" y="280.2" width="26" height="1" fill="#dedddb" />
<text x="12.8" y="276.7" font-size="13" fill="#505050" font-weight="normal" text-anchor="middle" font-family="'Liberation Sans', sans-serif" >4</text>
<rect x="0" y="283.7" width="26" height="1" fill="#dedddb" />
<rect x="0" y="341.9" width="26" height="1" fill="#dedddb" />
<text x="12.8" y="338.4" font-size="13" fill="#505050" font-weight="normal" text-anchor="middle" font-family="'Liberation Sans', sans-serif" >6</text>
<rect x="0" y="365.0" width="26" height="1" fill="#dedddb" />
<text x="12.8" y="361.5" font-size="13" fill="#505050" font-weight="normal" text-anchor="middle" font-family="'Liberation Sans', sans-serif" >7</text>
<rect x="0" y="368.5" width="26" height="1" fill="#dedddb" />
<rect x="0" y="426.9" width="26" height="1" fill="#dedddb" />
<text x="12.8" y="423.4" font-size="13" fill="#505050" font-weight="normal" text-anchor="middle" font-family="'Liberation Sans', sans-serif" >9</text>
<rect x="0" y="450.0" width="26" height="1" fill="#dedddb" />
<text x="12.8" y="446.5" font-size="13" fill="#505050" font-weight="normal" text-anchor="middle" font-family="'Liberation Sans', sans-serif" >10</text>
<rect x="0" y="453.5" width="26" height="1" fill="#dedddb" />
<rect x="0" y="511.79999999999995" width="26" height="1" fill="#dedddb" />
<text x="12.8" y="508.29999999999995" font-size="13" fill="#505050" font-weight="normal" text-anchor="middle" font-family="'Liberation Sans', sans-serif" >12</text>
<rect x="0" y="534.9" width="26" height="1" fill="#dedddb" />
<text x="12.8" y="531.4" font-size="13" fill="#505050" font-weight="normal" text-anchor="middle" font-family="'Liberation Sans', sans-serif" >13</text>
<rect x="0" y="538.7" width="26" height="1" fill="#dedddb" />
<rect x="0" y="597.0" width="26" height="1" fill="#dedddb" />
<text x="12.8" y="593.5" font-size="13" fill="#505050" font-weight="normal" text-anchor="middle" font-family="'Liberation Sans', sans-serif" >15</text>
<rect x="0" y="636.0" width="26" height="1" fill="#dedddb" />
<text x="12.8" y="632.5" font-size="13" fill="#505050" font-weight="normal" text-anchor="middle" font-family="'Liberation Sans', sans-serif" >16</text>
<rect x="0" y="659.0" width="26" height="1" fill="#dedddb" />
<text x="12.8" y="655.5" font-size="13" fill="#505050" font-weight="normal" text-anchor="middle" font-family="'Liberation Sans', sans-serif" >17</text>
<rect x="0" y="693.8" width="26" height="1" fill="#dedddb" />
<text x="12.8" y="690.3" font-size="13" fill="#505050" font-weight="normal" text-anchor="middle" font-family="'Liberation Sans', sans-serif" >18</text>
<rect x="0" y="728.9" width="26" height="1" fill="#dedddb" />
<text x="12.8" y="725.4" font-size="13" fill="#505050" font-weight="normal" text-anchor="middle" font-family="'Liberation Sans', sans-serif" >19</text>
<rect x="0" y="764.1" width="26" height="1" fill="#dedddb" />
<text x="12.8" y="760.6" font-size="13" fill="#505050" font-weight="normal" text-anchor="middle" font-family="'Liberation Sans', sans-serif" >20</text>
<rect x="0" y="799.1" width="26" height="1" fill="#dedddb" />
<text x="12.8" y="795.6" font-size="13" fill="#505050" font-weight="normal" text-anchor="middle" font-family="'Liberation Sans', sans-serif" >21</text>
<rect x="0" y="834.0" width="26" height="1" fill="#dedddb" />
<text x="12.8" y="830.5" font-size="13" fill="#505050" font-weight="normal" text-anchor="middle" font-family="'Liberation Sans', sans-serif" >22</text>
<rect x="11.5" y="161" width="1.2" height="3" fill="#217346" />
<text x="64.9" y="200.9" font-size="26" fill="#ffffff" font-weight="normal" text-anchor="start" font-family="'Liberation Sans', sans-serif" textLength="180.5" lengthAdjust="spacingAndGlyphs" stroke="#fff" stroke-width="0.35">Personal Budget</text>
<text x="64.3" y="252.7" font-size="15" fill="#5e5e5e" font-weight="normal" text-anchor="start" font-family="'Liberation Sans', sans-serif" textLength="198" lengthAdjust="spacingAndGlyphs" stroke="#5e5e5e" stroke-width="0.25">Percentage of Income Spent</text>
<text x="527" y="253" font-size="15" fill="#5e5e5e" font-weight="normal" text-anchor="start" font-family="'Liberation Sans', sans-serif" textLength="65.8" lengthAdjust="spacingAndGlyphs" stroke="#5e5e5e" stroke-width="0.25">Summary</text>
<text x="526.4" y="276.9" font-size="13.4" fill="#1c93fa" font-weight="normal" text-anchor="start" font-family="'Liberation Sans', sans-serif" textLength="152.5" lengthAdjust="spacingAndGlyphs" stroke="#1c93fa" stroke-width="0.4">TOTAL MONTHLY INCOME</text>
<rect x="523" y="280" width="237" height="1" fill="#aeada3" />
<text x="530" y="315.2" font-size="34" fill="#6c6c6c" font-weight="normal" text-anchor="start" font-family="'Liberation Sans', sans-serif" textLength="90.7" lengthAdjust="spacingAndGlyphs" >$3.750</text>
<text x="526.4" y="361.9" font-size="13.4" fill="#1c93fa" font-weight="normal" text-anchor="start" font-family="'Liberation Sans', sans-serif" textLength="163.9" lengthAdjust="spacingAndGlyphs" stroke="#1c93fa" stroke-width="0.4">TOTAL MONTHLY EXPENSES</text>
<rect x="523" y="365" width="237" height="1" fill="#aeada3" />
<text x="530" y="400.2" font-size="34" fill="#6c6c6c" font-weight="normal" text-anchor="start" font-family="'Liberation Sans', sans-serif" textLength="91.4" lengthAdjust="spacingAndGlyphs" >$2.336</text>
<text x="526.4" y="446.9" font-size="13.4" fill="#1c93fa" font-weight="normal" text-anchor="start" font-family="'Liberation Sans', sans-serif" textLength="157.8" lengthAdjust="spacingAndGlyphs" stroke="#1c93fa" stroke-width="0.4">TOTAL MONTHLY SAVINGS</text>
<rect x="523" y="450" width="237" height="1" fill="#aeada3" />
<text x="530" y="485.2" font-size="34" fill="#6c6c6c" font-weight="normal" text-anchor="start" font-family="'Liberation Sans', sans-serif" textLength="66.8" lengthAdjust="spacingAndGlyphs" >$550</text>
<text x="526.4" y="531.9" font-size="13.4" fill="#1c93fa" font-weight="normal" text-anchor="start" font-family="'Liberation Sans', sans-serif" textLength="89" lengthAdjust="spacingAndGlyphs" stroke="#1c93fa" stroke-width="0.4">CASH BALANCE</text>
<rect x="523" y="535" width="237" height="1" fill="#aeada3" />
<text x="530" y="570.2" font-size="34" fill="#6c6c6c" font-weight="normal" text-anchor="start" font-family="'Liberation Sans', sans-serif" textLength="66.8" lengthAdjust="spacingAndGlyphs" >$864</text>
<path d="M218.20 311.20 A132 132 0 0 1 310.39 537.67 L287.55 514.27 A99.3 99.3 0 0 0 218.20 343.90 Z" stroke="none" fill="#6dbbfb" stroke-width="1" />
<path d="M310.39 537.67 A132 132 0 1 1 218.20 311.20 L218.20 343.90 A99.3 99.3 0 1 0 287.55 514.27 Z" stroke="none" fill="#1c93fa" stroke-width="1" />
<path d="M186.5 414.2 L168.2 443.5" stroke="#646464" fill="none" stroke-width="4.7" />
<circle cx="180" cy="448.5" r="12.3" fill="none" stroke="#646464" stroke-width="4.6"/>
<path d="M203.9 428.6 A12.7 12.7 0 1 1 225.7 436.8 L204.6 459.2 H232.3" stroke="#646464" fill="none" stroke-width="4.7" stroke-miterlimit="10"/>
<circle cx="247.6" cy="424.1" r="9" fill="none" stroke="#646464" stroke-width="4.5"/>
<circle cx="273.4" cy="452" r="9" fill="none" stroke="#646464" stroke-width="4.6"/>
<path d="M247.5 412.9 C257 412.5 265 415.5 279.5 412.3 L271 417.7 C262 418.5 255 416.5 249 417.3 Z" stroke="none" fill="#646464" stroke-width="1" />
<path d="M279.5 412.3 L271 417.7 L240.9 465 L245.7 464.6 Z" stroke="none" fill="#646464" stroke-width="1" />
<rect x="859" y="280.4" width="1" height="255.3" fill="#b5b4aa" />
<rect x="855.8" y="535" width="186.5" height="1" fill="#b5b4aa" />
<rect x="855.8" y="279.9" width="3.5" height="1" fill="#b5b4aa" />
<text x="848" y="284.29999999999995" font-size="12.5" fill="#666" font-weight="normal" text-anchor="end" font-family="'Liberation Sans', sans-serif" textLength="37" lengthAdjust="spacingAndGlyphs" >$4.000</text>
<rect x="855.8" y="311.75" width="3.5" height="1" fill="#b5b4aa" />
<text x="848" y="316.15" font-size="12.5" fill="#666" font-weight="normal" text-anchor="end" font-family="'Liberation Sans', sans-serif" textLength="37" lengthAdjust="spacingAndGlyphs" >$3.500</text>
<rect x="855.8" y="343.59999999999997" width="3.5" height="1" fill="#b5b4aa" />
<text x="848" y="347.99999999999994" font-size="12.5" fill="#666" font-weight="normal" text-anchor="end" font-family="'Liberation Sans', sans-serif" textLength="37" lengthAdjust="spacingAndGlyphs" >$3.000</text>
<rect x="855.8" y="375.45" width="3.5" height="1" fill="#b5b4aa" />
<text x="848" y="379.84999999999997" font-size="12.5" fill="#666" font-weight="normal" text-anchor="end" font-family="'Liberation Sans', sans-serif" textLength="37" lengthAdjust="spacingAndGlyphs" >$2.500</text>
<rect x="855.8" y="407.29999999999995" width="3.5" height="1" fill="#b5b4aa" />
<text x="848" y="411.69999999999993" font-size="12.5" fill="#666" font-weight="normal" text-anchor="end" font-family="'Liberation Sans', sans-serif" textLength="37" lengthAdjust="spacingAndGlyphs" >$2.000</text>
<rect x="855.8" y="439.15" width="3.5" height="1" fill="#b5b4aa" />
<text x="848" y="443.54999999999995" font-size="12.5" fill="#666" font-weight="normal" text-anchor="end" font-family="'Liberation Sans', sans-serif" textLength="37" lengthAdjust="spacingAndGlyphs" >$1.500</text>
<rect x="855.8" y="471.0" width="3.5" height="1" fill="#b5b4aa" />
<text x="848" y="475.4" font-size="12.5" fill="#666" font-weight="normal" text-anchor="end" font-family="'Liberation Sans', sans-serif" textLength="37" lengthAdjust="spacingAndGlyphs" >$1.000</text>
<rect x="855.8" y="502.85" width="3.5" height="1" fill="#b5b4aa" />
<text x="848" y="507.25" font-size="12.5" fill="#666" font-weight="normal" text-anchor="end" font-family="'Liberation Sans', sans-serif" textLength="27" lengthAdjust="spacingAndGlyphs" >$500</text>
<rect x="855.8" y="534.7" width="3.5" height="1" fill="#b5b4aa" />
<text x="848" y="539.1" font-size="12.5" fill="#666" font-weight="normal" text-anchor="end" font-family="'Liberation Sans', sans-serif" textLength="15" lengthAdjust="spacingAndGlyphs" >$0</text>
<rect x="874.2" y="296.9" width="76.8" height="238.4" fill="#1c93fa" />
<rect x="951" y="387" width="77.7" height="148.3" fill="#6dbbfb" />
<rect x="870.2" y="564.1" width="6.6" height="6.6" fill="#1c93fa" />
<text x="879.8" y="571.3" font-size="13" fill="#666" font-weight="normal" text-anchor="start" font-family="'Liberation Sans', sans-serif" textLength="45.4" lengthAdjust="spacingAndGlyphs" >Income</text>
<rect x="957.1" y="564.1" width="6.8" height="6.6" fill="#6dbbfb" />
<text x="967.1" y="571.3" font-size="13" fill="#666" font-weight="normal" text-anchor="start" font-family="'Liberation Sans', sans-serif" textLength="54.2" lengthAdjust="spacingAndGlyphs" >Expenses</text>
<text x="63.8" y="632.2" font-size="16" fill="#5e5e5e" font-weight="normal" text-anchor="start" font-family="'Liberation Sans', sans-serif" textLength="113.4" lengthAdjust="spacingAndGlyphs" stroke="#5e5e5e" stroke-width="0.25">Monthly Income</text>
<text x="379.2" y="632.2" font-size="16" fill="#5e5e5e" font-weight="normal" text-anchor="start" font-family="'Liberation Sans', sans-serif" textLength="125.8" lengthAdjust="spacingAndGlyphs" stroke="#5e5e5e" stroke-width="0.25">Monthly Expenses</text>
<text x="812.1" y="632.2" font-size="16" fill="#5e5e5e" font-weight="normal" text-anchor="start" font-family="'Liberation Sans', sans-serif" textLength="115.3" lengthAdjust="spacingAndGlyphs" stroke="#5e5e5e" stroke-width="0.25">Monthly Savings</text>
<text x="63.3" y="652.7" font-size="13.4" fill="#1c93fa" font-weight="normal" text-anchor="start" font-family="'Liberation Sans', sans-serif" textLength="29" lengthAdjust="spacingAndGlyphs" stroke="#1c93fa" stroke-width="0.4">ITEM</text>
<text x="211.2" y="652.7" font-size="13.4" fill="#1c93fa" font-weight="normal" text-anchor="start" font-family="'Liberation Sans', sans-serif" textLength="51.8" lengthAdjust="spacingAndGlyphs" stroke="#1c93fa" stroke-width="0.4">AMOUNT</text>
<text x="378.2" y="652.7" font-size="13.4" fill="#1c93fa" font-weight="normal" text-anchor="start" font-family="'Liberation Sans', sans-serif" textLength="29" lengthAdjust="spacingAndGlyphs" stroke="#1c93fa" stroke-width="0.4">ITEM</text>
<text x="526.3" y="652.7" font-size="13.4" fill="#1c93fa" font-weight="normal" text-anchor="start" font-family="'Liberation Sans', sans-serif" textLength="60.7" lengthAdjust="spacingAndGlyphs" stroke="#1c93fa" stroke-width="0.4">DUE DATE</text>
<text x="644.2" y="652.7" font-size="13.4" fill="#1c93fa" font-weight="normal" text-anchor="start" font-family="'Liberation Sans', sans-serif" textLength="51.8" lengthAdjust="spacingAndGlyphs" stroke="#1c93fa" stroke-width="0.4">AMOUNT</text>
<text x="810.9" y="652.7" font-size="13.4" fill="#1c93fa" font-weight="normal" text-anchor="start" font-family="'Liberation Sans', sans-serif" textLength="32.6" lengthAdjust="spacingAndGlyphs" stroke="#1c93fa" stroke-width="0.4">DATE</text>
<text x="928.7" y="652.7" font-size="13.4" fill="#1c93fa" font-weight="normal" text-anchor="start" font-family="'Liberation Sans', sans-serif" textLength="51.8" lengthAdjust="spacingAndGlyphs" stroke="#1c93fa" stroke-width="0.4">AMOUNT</text>
<rect x="191.70000000000002" y="641.5" width="16" height="16" fill="#f4f4f4" rx="2" stroke="#8a8a8a" stroke-width="1"/>
<path d="M195.70000000000002 647.5 H203.70000000000002 L199.70000000000002 652 Z" stroke="none" fill="#6e6e6e" stroke-width="1" />
<rect x="309.5" y="641.5" width="16" height="16" fill="#f4f4f4" rx="2" stroke="#8a8a8a" stroke-width="1"/>
<path d="M313.5 647.5 H321.5 L317.5 652 Z" stroke="none" fill="#6e6e6e" stroke-width="1" />
<rect x="506.7" y="641.5" width="16" height="16" fill="#f4f4f4" rx="2" stroke="#8a8a8a" stroke-width="1"/>
<path d="M510.7 647.5 H518.7 L514.7 652 Z" stroke="none" fill="#6e6e6e" stroke-width="1" />
<rect x="624.5999999999999" y="641.5" width="16" height="16" fill="#f4f4f4" rx="2" stroke="#8a8a8a" stroke-width="1"/>
<path d="M628.5999999999999 647.5 H636.5999999999999 L632.5999999999999 652 Z" stroke="none" fill="#6e6e6e" stroke-width="1" />
<rect x="742.5" y="641.5" width="16" height="16" fill="#f4f4f4" rx="2" stroke="#8a8a8a" stroke-width="1"/>
<path d="M746.5 647.5 H754.5 L750.5 652 Z" stroke="none" fill="#6e6e6e" stroke-width="1" />
<rect x="909.1999999999999" y="641.5" width="16" height="16" fill="#f4f4f4" rx="2" stroke="#8a8a8a" stroke-width="1"/>
<path d="M913.1999999999999 647.5 H921.1999999999999 L917.1999999999999 652 Z" stroke="none" fill="#6e6e6e" stroke-width="1" />
<rect x="1027.8" y="641.5" width="16" height="16" fill="#f4f4f4" rx="2" stroke="#8a8a8a" stroke-width="1"/>
<path d="M1031.8 647.5 H1039.8 L1035.8 652 Z" stroke="none" fill="#6e6e6e" stroke-width="1" />
<rect x="60" y="659" width="266.8" height="1" fill="#afaea4" />
<rect x="375" y="659" width="384.7" height="1" fill="#afaea4" />
<rect x="808" y="659" width="237" height="1" fill="#afaea4" />
<rect x="60" y="693.8" width="266.8" height="1" fill="#afaea4" />
<rect x="808" y="693.8" width="237" height="1" fill="#afaea4" />
<rect x="60" y="728.9" width="266.8" height="1" fill="#afaea4" />
<rect x="808" y="728.9" width="237" height="1" fill="#afaea4" />
<rect x="375" y="693.8" width="384.7" height="1" fill="#afaea4" />
<rect x="375" y="728.9" width="384.7" height="1" fill="#afaea4" />
<rect x="375" y="764.1" width="384.7" height="1" fill="#afaea4" />
<rect x="375" y="799.1" width="384.7" height="1" fill="#afaea4" />
<rect x="375" y="834.0" width="384.7" height="1" fill="#afaea4" />
<text x="63.3" y="681.6999999999999" font-size="14" fill="#6b6b6b" font-weight="normal" text-anchor="start" font-family="'Liberation Sans', sans-serif" textLength="104" lengthAdjust="spacingAndGlyphs" >Income Source 1</text>
<text x="211.2" y="681.6999999999999" font-size="14" fill="#6b6b6b" font-weight="normal" text-anchor="start" font-family="'Liberation Sans', sans-serif" textLength="56.8" lengthAdjust="spacingAndGlyphs" >$2.500,00</text>
<text x="63.3" y="716.8" font-size="14" fill="#6b6b6b" font-weight="normal" text-anchor="start" font-family="'Liberation Sans', sans-serif" textLength="106.3" lengthAdjust="spacingAndGlyphs" >Income Source 2</text>
<text x="211.2" y="716.8" font-size="14" fill="#6b6b6b" font-weight="normal" text-anchor="start" font-family="'Liberation Sans', sans-serif" textLength="56.8" lengthAdjust="spacingAndGlyphs" >$1.000,00</text>
<text x="63.3" y="752.0" font-size="14" fill="#6b6b6b" font-weight="normal" text-anchor="start" font-family="'Liberation Sans', sans-serif" textLength="34.5" lengthAdjust="spacingAndGlyphs" >Other</text>
<text x="211.2" y="752.0" font-size="14" fill="#6b6b6b" font-weight="normal" text-anchor="start" font-family="'Liberation Sans', sans-serif" textLength="45.6" lengthAdjust="spacingAndGlyphs" >$250,00</text>
<clipPath id="sheetclip"><rect x="27" y="161" width="1277" height="688"/></clipPath>
<g clip-path="url(#sheetclip)">
<text x="378.4" y="681.6999999999999" font-size="14" fill="#6b6b6b" font-weight="normal" text-anchor="start" font-family="'Liberation Sans', sans-serif" textLength="97.5" lengthAdjust="spacingAndGlyphs" >Rent/mortgage</text>
<text x="526.5" y="681.6999999999999" font-size="14" fill="#6b6b6b" font-weight="normal" text-anchor="start" font-family="'Liberation Sans', sans-serif" textLength="39" lengthAdjust="spacingAndGlyphs" >[Date]</text>
<text x="644" y="681.6999999999999" font-size="14" fill="#6b6b6b" font-weight="normal" text-anchor="start" font-family="'Liberation Sans', sans-serif" textLength="46" lengthAdjust="spacingAndGlyphs" >$800,00</text>
<text x="378.4" y="716.8" font-size="14" fill="#6b6b6b" font-weight="normal" text-anchor="start" font-family="'Liberation Sans', sans-serif" textLength="44.4" lengthAdjust="spacingAndGlyphs" >Electric</text>
<text x="526.5" y="716.8" font-size="14" fill="#6b6b6b" font-weight="normal" text-anchor="start" font-family="'Liberation Sans', sans-serif" textLength="39" lengthAdjust="spacingAndGlyphs" >[Date]</text>
<text x="644" y="716.8" font-size="14" fill="#6b6b6b" font-weight="normal" text-anchor="start" font-family="'Liberation Sans', sans-serif" textLength="46" lengthAdjust="spacingAndGlyphs" >$120,00</text>
<text x="378.4" y="752.0" font-size="14" fill="#6b6b6b" font-weight="normal" text-anchor="start" font-family="'Liberation Sans', sans-serif" textLength="24.1" lengthAdjust="spacingAndGlyphs" >Gas</text>
<text x="526.5" y="752.0" font-size="14" fill="#6b6b6b" font-weight="normal" text-anchor="start" font-family="'Liberation Sans', sans-serif" textLength="39" lengthAdjust="spacingAndGlyphs" >[Date]</text>
<text x="644" y="752.0" font-size="14" fill="#6b6b6b" font-weight="normal" text-anchor="start" font-family="'Liberation Sans', sans-serif" textLength="39" lengthAdjust="spacingAndGlyphs" >$50,00</text>
<text x="378.4" y="787.0" font-size="14" fill="#6b6b6b" font-weight="normal" text-anchor="start" font-family="'Liberation Sans', sans-serif" textLength="70.5" lengthAdjust="spacingAndGlyphs" >Cell phone</text>
<text x="526.5" y="787.0" font-size="14" fill="#6b6b6b" font-weight="normal" text-anchor="start" font-family="'Liberation Sans', sans-serif" textLength="39" lengthAdjust="spacingAndGlyphs" >[Date]</text>
<text x="644" y="787.0" font-size="14" fill="#6b6b6b" font-weight="normal" text-anchor="start" font-family="'Liberation Sans', sans-serif" textLength="39" lengthAdjust="spacingAndGlyphs" >$45,00</text>
<text x="378.4" y="821.9" font-size="14" fill="#6b6b6b" font-weight="normal" text-anchor="start" font-family="'Liberation Sans', sans-serif" textLength="59.5" lengthAdjust="spacingAndGlyphs" >Groceries</text>
<text x="526.5" y="821.9" font-size="14" fill="#6b6b6b" font-weight="normal" text-anchor="start" font-family="'Liberation Sans', sans-serif" textLength="39" lengthAdjust="spacingAndGlyphs" >[Date]</text>
<text x="644" y="821.9" font-size="14" fill="#6b6b6b" font-weight="normal" text-anchor="start" font-family="'Liberation Sans', sans-serif" textLength="46" lengthAdjust="spacingAndGlyphs" >$500,00</text>
<text x="378.4" y="856.9" font-size="14" fill="#6b6b6b" font-weight="normal" text-anchor="start" font-family="'Liberation Sans', sans-serif" textLength="80" lengthAdjust="spacingAndGlyphs" >Car payment</text>
<text x="526.5" y="856.9" font-size="14" fill="#6b6b6b" font-weight="normal" text-anchor="start" font-family="'Liberation Sans', sans-serif" textLength="39" lengthAdjust="spacingAndGlyphs" >[Date]</text>
<text x="644" y="856.9" font-size="14" fill="#6b6b6b" font-weight="normal" text-anchor="start" font-family="'Liberation Sans', sans-serif" textLength="46" lengthAdjust="spacingAndGlyphs" >$273,00</text>
</g>
<text x="812.1" y="681.6999999999999" font-size="14" fill="#6b6b6b" font-weight="normal" text-anchor="start" font-family="'Liberation Sans', sans-serif" textLength="38.6" lengthAdjust="spacingAndGlyphs" >[Date]</text>
<text x="929.5" y="681.6999999999999" font-size="14" fill="#6b6b6b" font-weight="normal" text-anchor="start" font-family="'Liberation Sans', sans-serif" textLength="45.8" lengthAdjust="spacingAndGlyphs" >$200,00</text>
<text x="812.1" y="716.8" font-size="14" fill="#6b6b6b" font-weight="normal" text-anchor="start" font-family="'Liberation Sans', sans-serif" textLength="38.6" lengthAdjust="spacingAndGlyphs" >[Date]</text>
<text x="929.5" y="716.8" font-size="14" fill="#6b6b6b" font-weight="normal" text-anchor="start" font-family="'Liberation Sans', sans-serif" textLength="45.8" lengthAdjust="spacingAndGlyphs" >$250,00</text>
<text x="812.1" y="752.0" font-size="14" fill="#6b6b6b" font-weight="normal" text-anchor="start" font-family="'Liberation Sans', sans-serif" textLength="38.6" lengthAdjust="spacingAndGlyphs" >[Date]</text>
<text x="929.5" y="752.0" font-size="14" fill="#6b6b6b" font-weight="normal" text-anchor="start" font-family="'Liberation Sans', sans-serif" textLength="45.8" lengthAdjust="spacingAndGlyphs" >$100,00</text>
<path d="M323 758 H326 V764 H320 V761 H323 Z" stroke="none" fill="#3d50b4" stroke-width="1" />
<path d="M1041 758 H1044 V764 H1038 V761 H1041 Z" stroke="none" fill="#3d50b4" stroke-width="1" />
<path d="M21.2 857.6 V867.9 L13.8 862.75 Z" stroke="none" fill="#c2c2c2" stroke-width="1" />
<path d="M37 857.6 V867.9 L44.1 862.75 Z" stroke="none" fill="#c2c2c2" stroke-width="1" />
<rect x="60" y="849" width="119" height="22" fill="#ffffff" rx="2" filter="url(#sh)"/>
<linearGradient id="tabg" x1="0" y1="0" x2="0" y2="1"><stop offset="0" stop-color="#f6f6f6"/><stop offset="1" stop-color="#b4b4b4"/></linearGradient>
<rect x="63" y="851.5" width="113" height="17" fill="url(#tabg)" />
<text x="78.1" y="864.3" font-size="11.5" fill="#23874a" font-weight="bold" text-anchor="start" font-family="'Liberation Sans', sans-serif" textLength="82.7" lengthAdjust="spacingAndGlyphs" >Current Month</text>
<rect x="194" y="861.3" width="10.2" height="1.8" fill="#444" />
<rect x="198.2" y="856.8" width="1.8" height="10.5" fill="#444" />
<rect x="217" y="849" width="1" height="21" fill="#d4d4d4" />
</svg>
</body></html>
